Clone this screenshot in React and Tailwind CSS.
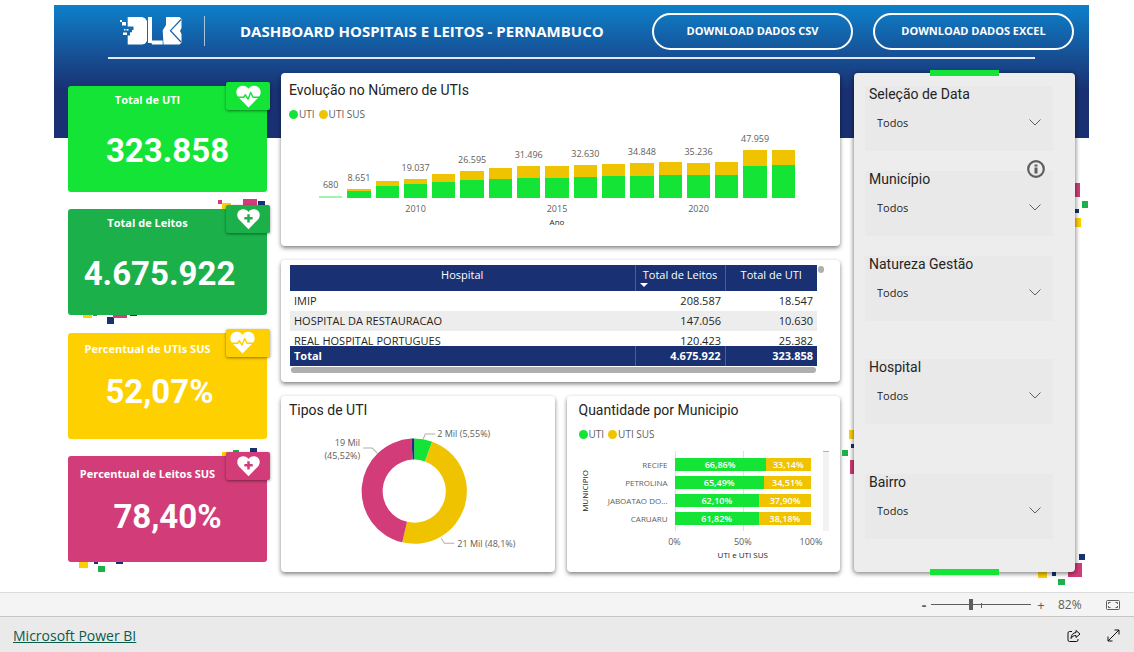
import React, { useState } from "react";

const GREEN = "#13e436";
const LEAF = "#1cb04a";
const YELLOW = "#ffd000";
const GOLD = "#f0c300";
const PINK = "#d23c78";
const NAVY = "#193172";

const kpis = [
  { label: "Total de UTI", value: "323.858", icon: "pulse", color: GREEN, bg: "bg-[#13e436]", labelPad: "pt-1", valuePad: "pt-5", badge: "justify-center" },
  {
    label: "Total de Leitos", value: "4.675.922", icon: "plus", color: LEAF, bg: "bg-[#1cb04a]", labelPad: "pt-1", valuePad: "pt-5 pr-4", badge: "justify-center",
    squares: [
      [150, -9, 4, 4, PINK], [154, -6, 9, 8, YELLOW], [175, -10, 14, 8, PINK], [190, -8, 7, 8, NAVY],
      [15, 100, 9, 9, YELLOW], [25, 100, 4, 7, PINK], [39, 108, 7, 7, NAVY], [45, 100, 14, 9, PINK], [62, 100, 7, 7, NAVY],
    ],
  },
  { label: "Percentual de UTIs SUS", value: "52,07%", icon: "pulse", color: YELLOW, bg: "bg-[#ffd000]", labelPad: "pt-[6px]", valuePad: "pt-3 pr-4", badge: "pl-1" },
  {
    label: "Percentual de Leitos SUS", value: "78,40%", icon: "plus", color: PINK, bg: "bg-[#d23c78]", labelPad: "pt-2", valuePad: "pt-3", badge: "justify-center",
    squares: [
      [154, -4, 9, 8, YELLOW], [165, -6, 6, 8, LEAF], [182, -8, 7, 8, NAVY],
      [11, 100, 9, 12, YELLOW], [26, 100, 4, 8, NAVY], [30, 110, 7, 6, LEAF], [48, 100, 7, 8, NAVY],
    ],
  },
];

const years = [
  { uti: 2, sus: 0, label: "680" },
  { uti: 7, sus: 2, label: "8.651" },
  { uti: 12, sus: 5 },
  { uti: 14, sus: 5, label: "19.037", year: "2010" },
  { uti: 16, sus: 8 },
  { uti: 18, sus: 9, label: "26.595" },
  { uti: 19, sus: 11 },
  { uti: 20, sus: 12, label: "31.496" },
  { uti: 20, sus: 12, year: "2015" },
  { uti: 21, sus: 12, label: "32.630" },
  { uti: 22, sus: 12 },
  { uti: 22, sus: 13, label: "34.848" },
  { uti: 23, sus: 13 },
  { uti: 23, sus: 12, label: "35.236", year: "2020" },
  { uti: 23, sus: 13 },
  { uti: 32, sus: 16, label: "47.959" },
  { uti: 33, sus: 15 },
];

const hospitals = [
  { name: "IMIP", leitos: "208.587", uti: "18.547" },
  { name: "HOSPITAL DA RESTAURACAO", leitos: "147.056", uti: "10.630" },
  { name: "REAL HOSPITAL PORTUGUES", leitos: "120.423", uti: "25.382" },
];

const municipios = [
  { name: "RECIFE", uti: 66.86, sus: 33.14 },
  { name: "PETROLINA", uti: 65.49, sus: 34.51 },
  { name: "JABOATAO DO...", uti: 62.1, sus: 37.9 },
  { name: "CARUARU", uti: 61.82, sus: 38.18 },
];

const tipos = [
  { value: 5.55, color: GREEN },
  { value: 48.1, color: GOLD },
  { value: 45.52, color: PINK },
  { value: 0.83, color: NAVY },
];

const filters = [
  { id: "data", label: "Seleção de Data", space: "mt-3" },
  { id: "municipio", label: "Município", space: "mt-5", info: true },
  { id: "gestao", label: "Natureza Gestão", space: "mt-5" },
  { id: "hospital", label: "Hospital", space: "mt-[38px]" },
  { id: "bairro", label: "Bairro", space: "mt-[50px]" },
];

const percent = (n) => `${n.toFixed(2).replace(".", ",")}%`;

const Squares = ({ items }) => (
  <svg className="absolute left-0 top-0 overflow-visible" width="1" height="1" aria-hidden="true">
    {items.map(([x, y, w, h, fill], i) => (
      <rect key={i} x={x} y={y} width={w} height={h} fill={fill} />
    ))}
  </svg>
);

const Heart = ({ type, color }) => (
  <svg width={type === "pulse" ? 25 : 23} height={type === "pulse" ? 23 : 22} viewBox="0 0 26 24" aria-hidden="true">
    <path
      d="M13 23.500 2.200 12.500C-.6 9.300-.2 4.400 3 2.200 6.400-.1 10.800.600 13 4 15.200.600 19.600-.1 23 2.200c3.200 2.200 3.600 7.100.8 10.300Z"
      fill="#fff"
    />
    {type === "pulse" ? (
      <path d="M0 12.800h8l1.800-2.600 2.700 4.600 2.800-7 2.400 5H26" fill="none" stroke={color} strokeWidth="1.500" strokeLinejoin="round" />
    ) : (
      <path d="M13 6.500v9.400M8.300 11.200h9.400" stroke={color} strokeWidth="2.800" />
    )}
  </svg>
);

const Logo = () => (
  <svg width="64" height="30" viewBox="0 0 64 30" role="img" aria-label="DLB">
    <g fill="#fff">
      <path d="M7.700 1H22l3 1.200L27 5v20l-2 2.800-3 .7H7.700V19.500H10v-3.200h2V14h1.500v-3.500H7.700Z" />
      <path d="M28 1h4v23.500h10.700v4H32l-.5-1.500H28Z" />
      <path d="M42.700 14.500 46 9V1h13.500l2 2v9l-1.500 3 1.500 3v8.500l-2 2H43.500Z" />
      <rect x="0" y="4" width="2" height="2" />
      <rect x="2" y="6" width="4" height="3.500" />
      <rect x="4" y="13" width="1.500" height="1.500" />
      <rect x="6.500" y="13" width="2" height="1.500" />
      <rect x="3" y="16.500" width="4" height="2.500" />
    </g>
    <path d="M61 3.500 50.500 14.700 61 26" fill="none" stroke="#1462a8" strokeWidth="1.200" />
  </svg>
);

const KpiCard = ({ kpi }) => (
  <div className="relative">
    {kpi.squares && <Squares items={kpi.squares} />}
    <div className={`relative h-[106px] rounded-[3px] text-center font-bold text-white ${kpi.bg}`}>
      <p className={`pr-10 text-[11px] leading-5 ${kpi.labelPad}`}>{kpi.label}</p>
      <p className={`font-['Roboto',sans-serif] text-[33px] leading-[42px] ${kpi.valuePad}`}>{kpi.value}</p>
    </div>
    <div className={`absolute -right-[3px] -top-1 flex h-7 w-11 items-center rounded-[2px] shadow-[0_1px_3px_rgba(0,0,0,0.45)] ${kpi.badge} ${kpi.bg}`}>
      <Heart type={kpi.icon} color={kpi.color} />
    </div>
  </div>
);

const Card = ({ className = "", children }) => (
  <section className={`min-w-0 rounded bg-white shadow-[0_2px_4px_rgba(0,0,0,0.5)] ${className}`}>{children}</section>
);

const CardTitle = ({ children }) => (
  <h2 className="font-['Roboto',sans-serif] text-[14px] leading-5 text-[#252423]">{children}</h2>
);

const Legend = () => (
  <ul className="mt-1 flex gap-1 text-[10px] leading-5 text-[#605e5c]">
    <li className="flex items-center gap-px">
      <span className="h-[9px] w-[9px] rounded-full bg-[#13e436]" />
      UTI
    </li>
    <li className="flex items-center gap-px">
      <span className="h-[9px] w-[9px] rounded-full bg-[#f0c300]" />
      UTI SUS
    </li>
  </ul>
);

const EvolutionCard = () => (
  <Card className="h-[173px] px-2 pt-[7px]">
    <CardTitle>Evolução no Número de UTIs</CardTitle>
    <Legend />
    <div className="ml-[30px] mr-[37px] text-[9px] text-[#605e5c]">
      <div className="flex h-[74px] items-end gap-[5px]">
        {years.map((y, i) => (
          <div key={i} className="flex min-w-0 flex-1 flex-col items-center">
            {y.label && <span className="mb-1 whitespace-nowrap leading-[14px]">{y.label}</span>}
            <div className="w-full bg-[#f0c300]" style={{ height: y.sus }} />
            <div className={`w-full ${i === 0 ? "bg-[#a1f4af]" : "bg-[#13e436]"}`} style={{ height: y.uti }} />
          </div>
        ))}
      </div>
      <div className="mt-[5px] flex h-3 gap-[5px] leading-3">
        {years.map((y, i) => (
          <span key={i} className="flex min-w-0 flex-1 justify-center">{y.year}</span>
        ))}
      </div>
      <p className="text-center text-[8px] leading-[14px] text-[#252423]">Ano</p>
    </div>
  </Card>
);

const HospitalTable = () => (
  <Card className="flex h-[122px] gap-px pl-[9px] pr-4 pt-[5px]">
    <div className="min-w-0 flex-1">
      <table className="w-full table-fixed border-collapse text-[11px] text-[#252423]">
        <colgroup>
          <col />
          <col className="w-[90px]" />
          <col className="w-[92px]" />
        </colgroup>
        <thead className="bg-[#193172] text-white">
          <tr className="h-[26px] align-top leading-5">
            <th className="font-normal">Hospital</th>
            <th className="relative border-l border-[#4a5f95] font-normal">
              Total de Leitos
              <svg className="absolute bottom-1 left-1" width="8" height="4" viewBox="0 0 8 4" aria-hidden="true">
                <path d="M0 0h8L4 4Z" fill="#fff" />
              </svg>
            </th>
            <th className="border-l border-[#4a5f95] font-normal">Total de UTI</th>
          </tr>
        </thead>
        <tbody className="leading-5 [&>tr:last-child]:leading-[11px] [&>tr:last-child>td]:pt-1 [&>tr:nth-child(2)]:bg-[#ededed]">
          {hospitals.map((h) => (
            <tr key={h.name}>
              <td className="whitespace-nowrap px-1">{h.name}</td>
              <td className="px-1 text-right">{h.leitos}</td>
              <td className="px-1 text-right">{h.uti}</td>
            </tr>
          ))}
        </tbody>
        <tfoot className="bg-[#193172] font-bold text-white">
          <tr className="leading-5">
            <td className="px-1">Total</td>
            <td className="border-l border-[#4a5f95] px-1 text-right">4.675.922</td>
            <td className="border-l border-[#4a5f95] px-1 text-right">323.858</td>
          </tr>
        </tfoot>
      </table>
      <div className="mx-px mt-px h-[6px] rounded-full bg-[#b0afae]" />
    </div>
    <div className="mt-px h-[7px] w-[6px] rounded-full bg-[#b0afae]" />
  </Card>
);

const point = (r, share) => {
  const a = (share / 100) * 2 * Math.PI;
  return `${(125 + r * Math.sin(a)).toFixed(2)} ${(71 - r * Math.cos(a)).toFixed(2)}`;
};

const TiposCard = () => {
  let start = 0;
  const slices = tipos.map((t) => {
    const end = start + t.value;
    const d = `M${point(52.5, start)}A52.5 52.5 0 0 1 ${point(52.5, end)}L${point(31.5, end)}A31.5 31.5 0 0 0 ${point(31.5, start)}Z`;
    start = end;
    return <path key={t.color} d={d} fill={t.color} />;
  });

  return (
    <Card className="h-[176px] px-2 pt-1">
      <CardTitle>Tipos de UTI</CardTitle>
      <svg className="w-full" viewBox="0 0 257 140" role="img" aria-label="Tipos de UTI">
        {slices}
        <g fill="none" stroke="#b3b0ad" strokeWidth="1">
          <path d="M134 19l2-5h10M152 118l3 5h10M88 33l-5-5H74" />
        </g>
        <g fill="#605e5c" fontSize="9">
          <text x="148" y="17">2 Mil (5,55%)</text>
          <text x="168" y="127">21 Mil (48,1%)</text>
          <text x="71" y="26" textAnchor="end">19 Mil</text>
          <text x="71" y="39" textAnchor="end">(45,52%)</text>
        </g>
      </svg>
    </Card>
  );
};

const MunicipioCard = () => (
  <Card className="h-[176px] pl-3 pr-[11px] pt-1">
    <CardTitle>Quantidade por Municipio</CardTitle>
    <Legend />
    <div className="mt-[7px] flex text-[9px] text-[#605e5c]">
      <div className="flex h-20 w-3 items-center justify-center">
        <span className="rotate-180 text-[8px] leading-3 text-[#252423] [writing-mode:vertical-rl]">MUNICIPIO</span>
      </div>
      <ul className="flex h-20 w-[77px] flex-col justify-center gap-[5px] text-right text-[8px]">
        {municipios.map((m) => (
          <li key={m.name} className="h-[13px] whitespace-nowrap leading-[13px]">{m.name}</li>
        ))}
      </ul>
      <div className="ml-[7px] min-w-0 flex-1">
        <div className="flex h-20 flex-col justify-center gap-[5px] bg-[linear-gradient(90deg,#e1dfdd_1px,transparent_1px)] bg-[length:50%_100%]">
          {municipios.map((m) => (
            <div key={m.name} className="flex h-[13px] bg-white text-center font-semibold leading-[13px] text-white">
              <span className="bg-[#13e436]" style={{ width: `${m.uti}%` }}>{percent(m.uti)}</span>
              <span className="bg-[#f0c300]" style={{ width: `${m.sus}%` }}>{percent(m.sus)}</span>
            </div>
          ))}
        </div>
        <div className="-mx-4 mt-[5px] flex justify-between leading-3">
          <span className="w-8 text-center">0%</span>
          <span className="w-8 text-center">50%</span>
          <span className="w-8 text-center">100%</span>
        </div>
        <p className="text-center text-[8px] leading-[14px] text-[#252423]">UTI e UTI SUS</p>
      </div>
      <div className="ml-3 h-20 w-[6px] border-t border-[#b3b0ad] bg-[#f3f2f1]" />
    </div>
  </Card>
);

const Filter = ({ filter }) => (
  <div className={`relative mx-[11px] mr-[22px] h-[65px] bg-[#e9e9e9] pl-1 ${filter.space}`}>
    <label htmlFor={filter.id} className="block font-['Roboto',sans-serif] text-[14px] leading-4 text-[#252423]">
      {filter.label}
    </label>
    <div className="relative mt-[11px]">
      <select id={filter.id} className="block h-5 w-full appearance-none bg-transparent pl-2 text-[11px] leading-5 text-[#252423] outline-none">
        <option>Todos</option>
      </select>
      <svg className="pointer-events-none absolute right-3 top-[6px]" width="12" height="7" viewBox="0 0 12 7" aria-hidden="true">
        <path d="M.5.500 6 6 11.500.500" fill="none" stroke="#605e5c" />
      </svg>
    </div>
    {filter.info && (
      <svg className="absolute -top-[11px] right-2" width="18" height="18" viewBox="0 0 18 18" role="img" aria-label="Informações">
        <circle cx="9" cy="9" r="7.800" fill="none" stroke="#605e5c" strokeWidth="2.200" />
        <path d="M7.500 4.500h3v2h-3zM7.500 7.500h3v6h-3z" fill="#605e5c" />
      </svg>
    )}
  </div>
);

const FilterPanel = () => (
  <aside className="relative">
    <Squares
      items={[
        [216, 110, 10, 14, PINK], [228, 128, 6, 7, LEAF], [217, 136, 8, 4, NAVY], [217, 145, 10, 9, YELLOW],
        [-5, 357, 9, 9, YELLOW], [-3, 371, 4, 4, NAVY], [-12, 377, 6, 6, LEAF], [-4, 387, 9, 14, PINK],
        [225, 481, 6, 6, NAVY], [214, 490, 14, 14, PINK], [184, 496, 9, 9, YELLOW], [198, 496, 4, 7, NAVY], [204, 506, 7, 6, LEAF],
      ]}
    />
    <div className="relative h-full rounded bg-[#ededed] pt-px shadow-[0_1px_4px_1px_rgba(0,0,0,0.45)]">
      {filters.map((f) => (
        <Filter key={f.id} filter={f} />
      ))}
      <span className="absolute -top-[3px] left-[76px] h-[6px] w-[69px] bg-[#13e436]" />
      <span className="absolute -bottom-[3px] left-[76px] h-[6px] w-[69px] bg-[#13e436]" />
    </div>
  </aside>
);

const ZoomBar = () => {
  const [zoom, setZoom] = useState(40);

  return (
    <div className="flex h-6 items-center justify-end border-t border-[#dcdcdc] bg-[#f4f4f4] pr-[14px] text-[#605e5c]">
      <button type="button" aria-label="Reduzir" className="w-3 text-[14px] font-bold leading-5">-</button>
      <div className="relative ml-px flex h-4 w-[100px] items-center">
        <input
          type="range"
          aria-label="Zoom"
          min="0"
          max="100"
          value={zoom}
          onChange={(e) => setZoom(Number(e.target.value))}
          className="h-px w-full appearance-none bg-[#605e5c] outline-none [&::-webkit-slider-thumb]:h-[11px] [&::-webkit-slider-thumb]:w-1 [&::-webkit-slider-thumb]:appearance-none [&::-webkit-slider-thumb]:bg-[#605e5c]"
        />
        <span className="absolute left-1/2 top-[6px] h-[5px] w-px bg-[#605e5c]" />
      </div>
      <button type="button" aria-label="Ampliar" className="ml-1 w-3 text-[13px] leading-5">+</button>
      <span className="ml-[11px] w-6 text-[12px] leading-5">82%</span>
      <button type="button" aria-label="Ajustar à página" className="ml-6">
        <svg width="14" height="10" viewBox="0 0 14 10" fill="none" stroke="#605e5c">
          <rect x=".5" y=".5" width="13" height="9" rx="1" />
          <path d="M4.500 2.500h-2v1.500M9.500 2.500h2v1.500M4.500 7.500h-2V6M9.500 7.500h2V6" />
        </svg>
      </button>
    </div>
  );
};

const App = () => (
  <div className="min-h-screen bg-[#eaeaea] font-['Open_Sans','Noto_Sans',sans-serif]">
    <div className="bg-white pb-5 pl-[54px] pr-[45px] pt-[5px]">
      <div className="bg-[linear-gradient(180deg,#0d80ca_0px,#174e93_52px,#193172_85px,#193172_133px)] bg-[length:100%_133px] bg-no-repeat">
        <header className="flex h-[52px] items-center pl-[66px] pr-[15px] text-white">
          <Logo />
          <span className="ml-5 h-[30px] w-px bg-[#a9c3df]" />
          <h1 className="ml-[35px] flex-1 whitespace-nowrap text-[15px] font-bold">DASHBOARD HOSPITAIS E LEITOS - PERNAMBUCO</h1>
          <div className="flex gap-5 text-[11px] font-bold">
            <button type="button" className="h-[37px] w-[201px] rounded-full border-2 border-white">DOWNLOAD DADOS CSV</button>
            <button type="button" className="h-[37px] w-[201px] rounded-full border-2 border-white">DOWNLOAD DADOS EXCEL</button>
          </div>
        </header>
        <div className="mx-[54px] h-0.5 bg-[#e3eaf3]" />

        <main className="mx-[14px] mt-[14px] grid grid-cols-[199px_minmax(0,1fr)_221px] gap-[14px]">
          <div className="flex flex-col justify-between pb-[10px] pt-[13px]">
            {kpis.map((kpi) => (
              <KpiCard key={kpi.label} kpi={kpi} />
            ))}
          </div>

          <div className="flex min-w-0 flex-col gap-[14px]">
            <EvolutionCard />
            <HospitalTable />
            <div className="grid grid-cols-2 gap-3">
              <TiposCard />
              <MunicipioCard />
            </div>
          </div>

          <FilterPanel />
        </main>
      </div>
    </div>

    <ZoomBar />

    <footer className="flex h-9 items-center border-t border-[#c8c6c4] pl-[13px] pr-[14px] pt-0.5">
      <a href="#powerbi" className="text-[14px] leading-5 text-[#0b5a4c] underline">Microsoft Power BI</a>
      <button type="button" aria-label="Compartilhar" className="ml-auto">
        <svg width="14" height="14" viewBox="0 0 14 14" fill="none" stroke="#111">
          <path d="M5 2.500H2.500a1.500 1.500 0 0 0-1.500 1.500v7a1.500 1.500 0 0 0 1.500 1.500h7A1.500 1.500 0 0 0 11 11v-1" />
          <path d="M9 1.500 13 5 9 8.500v-2C6.500 6.500 5 7.500 4 9.500 4.200 6 6 3.800 9 3.500Z" strokeLinejoin="round" />
        </svg>
      </button>
      <button type="button" aria-label="Tela cheia" className="ml-[26px]">
        <svg width="13" height="13" viewBox="0 0 13 13" fill="none" stroke="#111">
          <path d="M1 12 12 1M7.500 1H12v4.500M1 7.500V12h4.500" />
        </svg>
      </button>
    </footer>
  </div>
);

export default App;
